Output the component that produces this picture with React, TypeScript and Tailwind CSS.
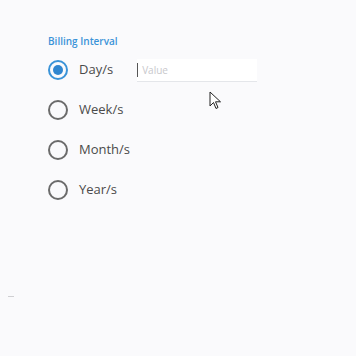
import { useState } from "react";

const options = ["Day/s", "Week/s", "Month/s", "Year/s"];

export default function App() {
  const [selected, setSelected] = useState("Day/s");

  return (
    <div
      className="relative w-[356px] h-[356px] bg-[#fafafc] overflow-hidden"
      style={{ fontFamily: "'Open Sans', 'Liberation Sans', sans-serif" }}
    >
      <div className="pt-[35px] pl-[48px]">
        <p className="text-[10px] font-semibold text-[#3a93d8] leading-[12px]">Billing Interval</p>

        <div className="mt-[13px] flex flex-col gap-[20px]">
          {options.map((opt) => (
            <div key={opt} className="flex items-center h-[20px]">
              <button
                onClick={() => setSelected(opt)}
                className={
                  selected === opt
                    ? "w-[20px] h-[20px] rounded-full border-2 border-[#3a93d8] flex items-center justify-center"
                    : "w-[20px] h-[20px] rounded-full border-2 border-[#6b6b6b]"
                }
              >
                {selected === opt && <span className="w-[10px] h-[10px] rounded-full bg-[#2f86d0]" />}
              </button>
              <span className="ml-[11px] text-[13px] text-[#4a4a4a]">{opt}</span>
              {opt === "Day/s" && (
                <div className="ml-[24px] w-[120px] h-[22px] bg-white flex items-center shadow-[0_1px_0_#e4e6ea]">
                  <span className="w-px h-[14px] bg-[#555]" />
                  <span className="ml-[4px] text-[10px] text-[#c8c8cc]">Value</span>
                </div>
              )}
            </div>
          ))}
        </div>
      </div>

      {/* mouse pointer */}
      <svg className="absolute left-[209px] top-[91px]" width="14" height="20" viewBox="0 0 14 20">
        <path d="M1 1 L1 15 L4.5 11.5 L7 17.5 L9 16.5 L6.5 10.8 L11.5 10.8 Z" fill="#fff" stroke="#222" strokeWidth="1" />
      </svg>

      <span className="absolute left-[8px] top-[296px] w-[6px] h-[1px] bg-[#cfcfd2]" />
    </div>
  );
}
